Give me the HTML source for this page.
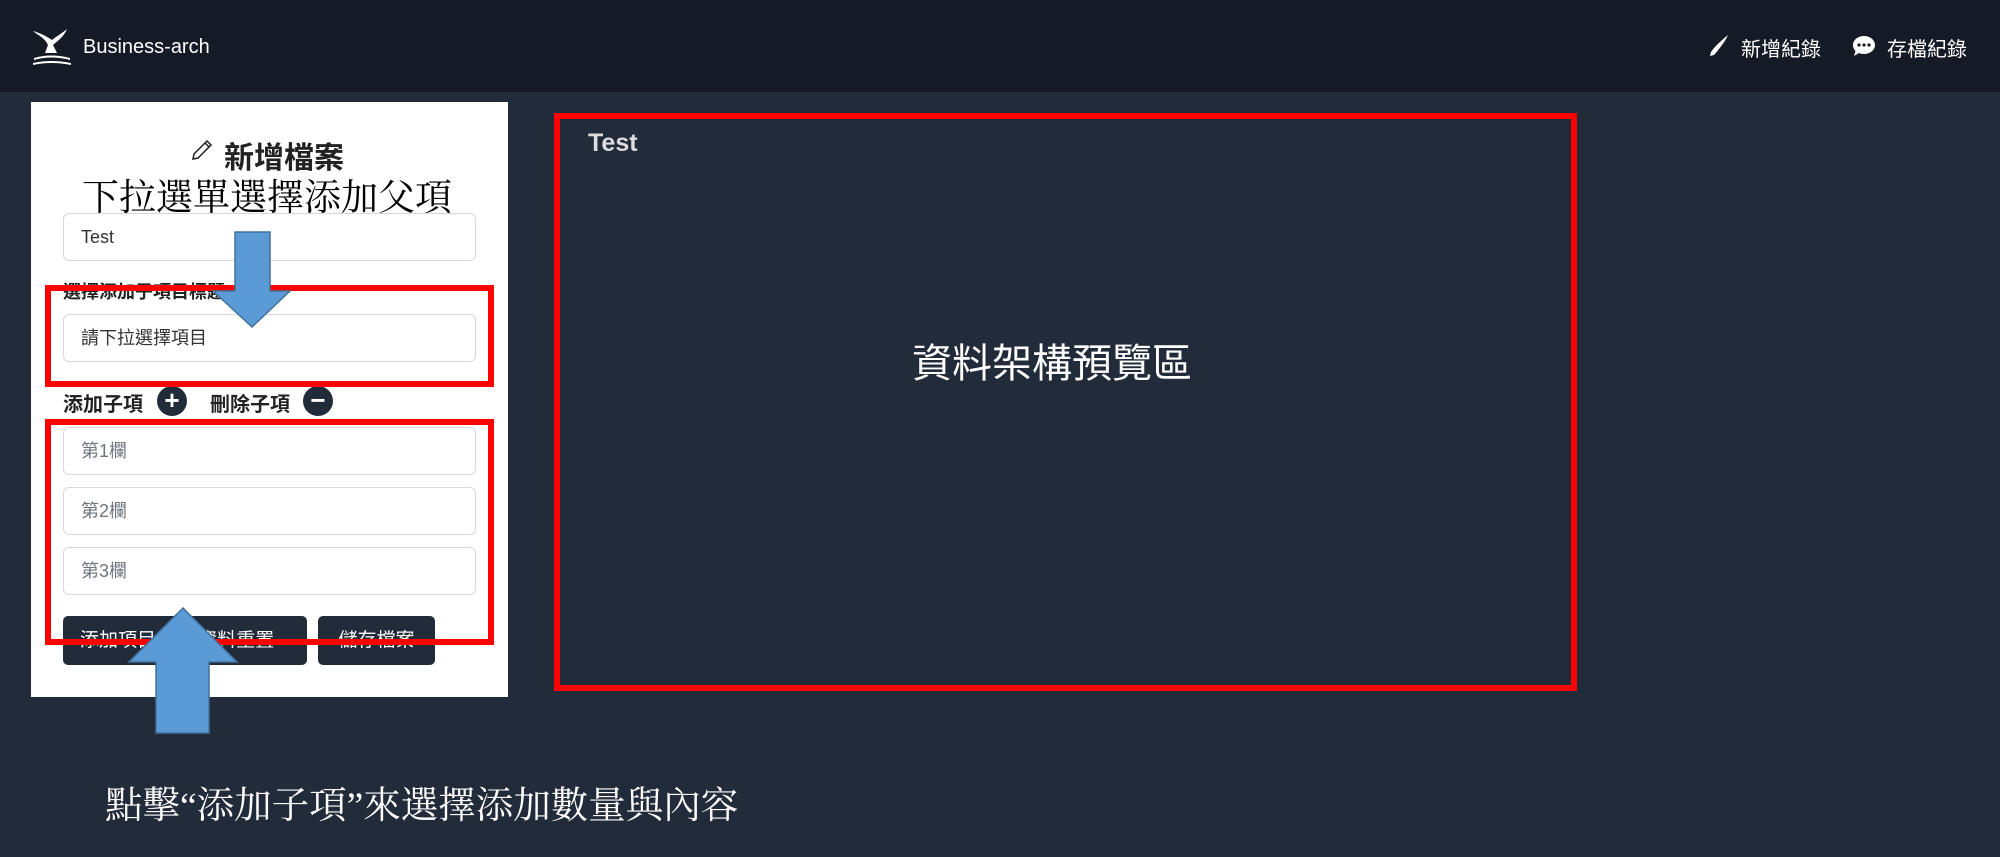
<!DOCTYPE html>
<html><head><meta charset="utf-8"><style>
*{box-sizing:border-box;margin:0;padding:0}
body{width:2000px;height:857px;background:#212b3a;position:relative;overflow:hidden;font-family:"Liberation Sans","Noto Sans CJK TC",sans-serif}
.abs{position:absolute}
.nav{left:0;top:0;width:2000px;height:92px;background:#151b26}
.navt{color:#fff;font-size:20px;white-space:nowrap}
.card{left:31px;top:102px;width:477px;height:595px;background:#fff}
.inp{position:absolute;left:63px;width:413px;height:48px;border:1px solid #d4d8de;border-radius:6px;background:#fff;font-size:18px;padding-left:17px;line-height:46px;color:#333}
.ph{color:#6c757d}
.red{position:absolute;border:6px solid #ff0000}
.btn{position:absolute;top:616px;height:49px;background:#212b3a;border-radius:5px;color:#fff;font-size:19px;line-height:49px;text-align:center}
.circ{position:absolute;width:30px;height:30px;border-radius:50%;background:#212b3a;color:#fff;text-align:center;line-height:28px;font-size:26px;font-weight:bold}
.serif{font-family:"Liberation Serif","Noto Serif CJK SC",serif;white-space:nowrap}
</style></head><body>
<div class="abs nav"></div>
<svg class="abs" style="left:31px;top:28px" width="42" height="38" viewBox="0 0 42 38"><path d="M2 3 C8 8 14 10 17 17 L14 25 L26 25 L22 17 C28 12 33 8 36 1 C30 6 26 8 21 12 C15 8 9 5 2 3Z" fill="#fff"/><path d="M3 30 Q20 25 39 30 L39 32 Q20 27 3 32Z M2 35 Q20 31 40 35 L40 37 Q20 33 2 37Z" fill="#fff"/></svg>
<div class="abs navt" style="left:83px;top:36px">Business-arch</div>
<svg class="abs" style="left:1708px;top:34px" width="22" height="24" viewBox="0 0 22 24"><path d="M20 1 C14 6 7 12 3 18 L2 22 L6 21 C11 15 17 8 20 1Z" fill="#fff"/></svg>
<div class="abs navt" style="left:1741px;top:33px">新增紀錄</div>
<svg class="abs" style="left:1852px;top:35px" width="24" height="22" viewBox="0 0 24 22"><path d="M12 1 C18 1 23 5 23 10 C23 15 18 19 12 19 C10 19 8 18.6 7 18 L2 21 L3.5 16 C1.8 14.5 1 12.3 1 10 C1 5 6 1 12 1Z" fill="#fff"/><circle cx="7" cy="10" r="1.6" fill="#151b26"/><circle cx="12" cy="10" r="1.6" fill="#151b26"/><circle cx="17" cy="10" r="1.6" fill="#151b26"/></svg>
<div class="abs navt" style="left:1887px;top:33px">存檔紀錄</div>

<div class="abs card"></div>
<svg class="abs" style="left:191px;top:139px" width="22" height="22" viewBox="0 0 22 22"><path d="M16 2 L20 6 L7 19 L2 20 L3 15 Z M14 4 L18 8" fill="none" stroke="#222" stroke-width="1.5"/></svg>
<div class="abs" style="left:224px;top:133px;font-size:30px;font-weight:bold;color:#222">新增檔案</div>
<div class="abs serif" style="left:82px;top:167px;font-size:37px;color:#000">下拉選單選擇添加父項</div>
<div class="inp" style="top:213px">Test</div>
<div class="abs" style="left:63px;top:278px;font-size:18px;font-weight:bold;color:#222">選擇添加子項目標題</div>
<div class="inp" style="top:314px">請下拉選擇項目</div>
<div class="abs" style="left:63px;top:388px;font-size:20px;font-weight:bold;color:#222">添加子項</div>
<div class="circ" style="left:157px;top:386px">+</div>
<div class="abs" style="left:210px;top:388px;font-size:20px;font-weight:bold;color:#222">刪除子項</div>
<div class="circ" style="left:303px;top:386px">−</div>
<div class="inp ph" style="top:427px">第1欄</div>
<div class="inp ph" style="top:487px">第2欄</div>
<div class="inp ph" style="top:547px">第3欄</div>
<div class="btn" style="left:63px;width:244px;text-align:left;padding-left:17px">添加項目&nbsp;&nbsp;&nbsp;&nbsp;&nbsp;&nbsp;&nbsp;&nbsp;資料重置</div>
<div class="btn" style="left:318px;width:117px">儲存檔案</div>
<div class="red" style="left:45px;top:285px;width:449px;height:102px"></div>
<div class="red" style="left:45px;top:419px;width:449px;height:226px"></div>
<svg class="abs" style="left:0;top:0" width="520" height="857"><polygon points="235,232 270,232 270,291 290,291 252,327 213,291 235,291" fill="#5b9bd5" stroke="#41719c" stroke-width="1.5"/><polygon points="183,608 237,662 209,662 209,733 156,733 156,662 129,662" fill="#5b9bd5" stroke="#41719c" stroke-width="1.5"/></svg>
<div class="abs serif" style="left:105px;top:775px;font-size:37.5px;color:#fff">點擊“添加子項”來選擇添加數量與內容</div>

<div class="red" style="left:554px;top:113px;width:1023px;height:578px"></div>
<div class="abs" style="left:588px;top:129px;font-size:25px;font-weight:bold;color:#ddd">Test</div>
<div class="abs" style="left:912px;top:331px;font-size:40px;color:#fff;white-space:nowrap">資料架構預覽區</div>
</body></html>
